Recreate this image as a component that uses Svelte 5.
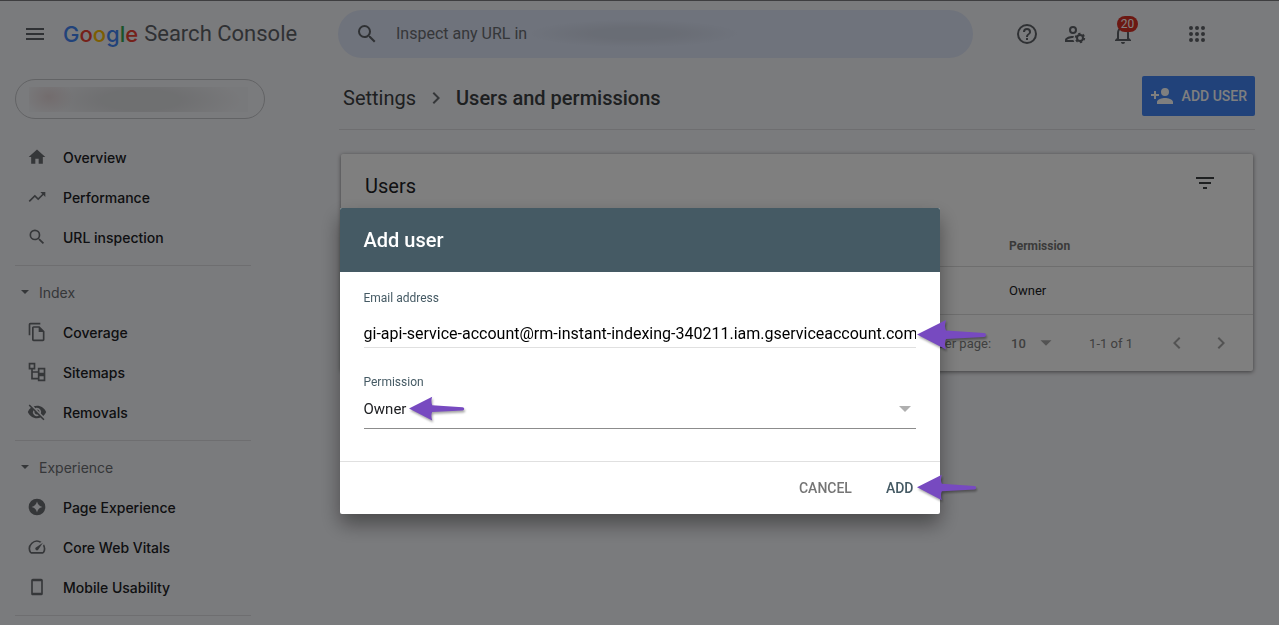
<script>
  const groups = [
    { title: "", items: [
      { name: "Overview", icon: "home" },
      { name: "Performance", icon: "trend" },
      { name: "URL inspection", icon: "search" },
    ] },
    { title: "Index", items: [
      { name: "Coverage", icon: "pages" },
      { name: "Sitemaps", icon: "tree" },
      { name: "Removals", icon: "hidden" },
    ] },
    { title: "Experience", items: [
      { name: "Page Experience", icon: "spark" },
      { name: "Core Web Vitals", icon: "speed" },
      { name: "Mobile Usability", icon: "phone" },
    ] },
  ];

  const icons = {
    menu: "M3 18h18v-2H3v2zm0-5h18v-2H3v2zm0-7v2h18V6H3z",
    home: "M10 20v-6h4v6h5v-8h3L12 3 2 12h3v8z",
    trend: "M16 6l2.29 2.29-4.88 4.88-4-4L2 16.59 3.41 18l6-6 4 4 6.3-6.29L22 12V6z",
    search: "M15.5 14h-.79l-.28-.27A6.47 6.47 0 0 0 16 9.5 6.5 6.5 0 1 0 9.5 16c1.61 0 3.09-.59 4.23-1.57l.27.28v.79l5 4.99L20.49 19l-4.99-5zm-6 0a4.5 4.5 0 1 1 0-9 4.5 4.5 0 0 1 0 9z",
    pages: "M16 1H4a2 2 0 0 0-2 2v13h2V3h12V1zm-1 4H8c-1.1 0-2 .9-2 2v14c0 1.1.9 2 2 2h11c1.1 0 2-.9 2-2V11l-6-6zM8 21V7h6v5h5v9H8z",
    tree: "M2 1v8h3v12h8v2h9v-8h-9v4H7v-6h6v2h9V7h-9v4H7V9h3V1H2zm2 2h4v4H4V3zm11 6h5v4h-5V9zm0 8h5v4h-5v-4z",
    hidden: "M12 7a5 5 0 0 1 4.64 6.83l2.92 2.92A11.8 11.8 0 0 0 23 12c-1.73-4.39-6-7.5-11-7.5-1.4 0-2.74.25-3.98.7l2.16 2.16C10.74 7.13 11.35 7 12 7zM2 4.27l2.28 2.28.46.46A11.8 11.8 0 0 0 1 12c1.73 4.39 6 7.5 11 7.5 1.55 0 3.03-.3 4.38-.84l.42.42L19.73 22 21 20.73 3.27 3 2 4.27zM7.53 9.8l1.55 1.55a3 3 0 0 0 3.57 3.57l1.55 1.55A5 5 0 0 1 7.53 9.8zm4.31-.78l3.15 3.15.02-.16a3 3 0 0 0-3.17-2.99z",
    spark: "M12 2a10 10 0 1 0 0 20 10 10 0 0 0 0-20zm0 3.5c.9 3.6 2.9 5.6 6.5 6.5-3.6.9-5.6 2.9-6.5 6.5-.9-3.6-2.9-5.6-6.5-6.5 3.6-.9 5.6-2.9 6.5-6.5z",
    speed: "M20.38 8.57l-1.23 1.85a8 8 0 0 1-.22 7.58H5.07A8 8 0 0 1 15.58 6.85l1.85-1.23A10 10 0 0 0 3.35 19a2 2 0 0 0 1.72 1h13.85a2 2 0 0 0 1.74-1 10 10 0 0 0-.27-10.44zm-9.79 6.84a2 2 0 0 0 2.83 0l5.66-8.49-8.49 5.66a2 2 0 0 0 0 2.83z",
    phone: "M17 2H7a2 2 0 0 0-2 2v16c0 1.1.9 2 2 2h10a2 2 0 0 0 2-2V4a2 2 0 0 0-2-2zm0 17H7V5h10v14z",
    help: "M11 18h2v-2h-2v2zm1-16a10 10 0 1 0 0 20 10 10 0 0 0 0-20zm0 18a8 8 0 1 1 0-16 8 8 0 0 1 0 16zm0-14a4 4 0 0 0-4 4h2a2 2 0 1 1 4 0c0 2-3 1.75-3 5h2c0-2.25 3-2.5 3-5a4 4 0 0 0-4-4z",
    bell: "M12 22a2 2 0 0 0 2-2h-4c0 1.1.9 2 2 2zm6-6v-5c0-3.07-1.63-5.64-4.5-6.32V4a1.5 1.5 0 0 0-3 0v.68C7.64 5.36 6 7.92 6 11v5l-2 2v1h16v-1l-2-2zm-2 1H8v-6c0-2.48 1.51-4.5 4-4.5s4 2.02 4 4.5v6z",
    apps: "M6 8a2 2 0 1 0 0-4 2 2 0 0 0 0 4zm6 0a2 2 0 1 0 0-4 2 2 0 0 0 0 4zm6 0a2 2 0 1 0 0-4 2 2 0 0 0 0 4zM6 14a2 2 0 1 0 0-4 2 2 0 0 0 0 4zm6 0a2 2 0 1 0 0-4 2 2 0 0 0 0 4zm6 0a2 2 0 1 0 0-4 2 2 0 0 0 0 4zM6 20a2 2 0 1 0 0-4 2 2 0 0 0 0 4zm6 0a2 2 0 1 0 0-4 2 2 0 0 0 0 4zm6 0a2 2 0 1 0 0-4 2 2 0 0 0 0 4z",
    addPerson: "M15 12a4 4 0 1 0 0-8 4 4 0 0 0 0 8zm-9-2V7H4v3H1v2h3v3h2v-3h3v-2H6zm9 4c-2.67 0-8 1.34-8 4v2h16v-2c0-2.66-5.33-4-8-4z",
    filter: "M10 18h4v-2h-4v2zM3 6v2h18V6H3zm3 7h12v-2H6v2z",
    left: "M15.41 7.41L14 6l-6 6 6 6 1.41-1.41L10.83 12z",
    right: "M10 6L8.59 7.41 13.17 12l-4.58 4.59L10 18l6-6z",
    down: "M6 9l6 6 6-6z",
    userGear: "M10 4a4 4 0 1 0 0 8 4 4 0 0 0 0-8zm0 2a2 2 0 1 1 0 4 2 2 0 0 1 0-4zM4 18c.2-.7 3-2 6.3-2a7 7 0 0 1 .7-2C7 13.7 2 15.3 2 18v2h9.3a7 7 0 0 1-.9-2H4z",
  };

  let email = "gi-api-service-account@rm-instant-indexing-340211.iam.gserviceaccount.com";
  let permission = "Owner";
</script>

{#snippet icon(name, size = 24)}
  <svg viewBox="0 0 24 24" width={size} height={size} fill="currentColor" aria-hidden="true">
    <path d={icons[name]} fill-rule={name === "tree" ? "evenodd" : "nonzero"} />
    {#if name === "userGear"}
      <circle cx="17" cy="16" r="3" fill="none" stroke="currentColor" stroke-width="2" />
      <circle cx="17" cy="16" r="4.3" fill="none" stroke="currentColor" stroke-width="1.8" stroke-dasharray="2.25 2.25" />
    {/if}
  </svg>
{/snippet}

{#snippet arrow(place)}
  <svg class="arrow {place}" viewBox="0 0 70 32" aria-hidden="true">
    <path d="M0 15.5L29 1Q27 7 29 11.5L67 14Q69 14 69 16Q69 18 67 18L29 20Q27 24 29 30.5Z" fill="#774ac0" />
  </svg>
{/snippet}

<div class="page">
  <header>
    <div class="brand">
      <button class="plain" aria-label="Menu">{@render icon("menu")}</button>
      <a class="logo" href="#home">
        <span class="google"><b class="blue">G</b><b class="red">o</b><b class="yellow">o</b><b class="blue">g</b><b class="green">l</b><b class="red">e</b></span>
        <span>Search Console</span>
      </a>
    </div>
    <div class="inspect">
      {@render icon("search")}
      <input type="text" placeholder="Inspect any URL in" aria-label="Inspect any URL" />
      <span class="smudge"></span>
    </div>
    <div class="tools">
      <button class="plain" aria-label="Help">{@render icon("help")}</button>
      <button class="plain" aria-label="User settings">{@render icon("userGear")}</button>
      <button class="plain" aria-label="Notifications">{@render icon("bell")}<span class="badge">20</span></button>
      <button class="plain apps" aria-label="Apps">{@render icon("apps")}</button>
    </div>
  </header>

  <div class="columns">
    <nav>
      <button class="property" aria-label="Property"><span></span></button>
      {#each groups as group}
        <section>
          {#if group.title}
            <button class="group">{@render icon("down", 16)}{group.title}</button>
          {/if}
          {#each group.items as item}
            <a class="item" href="#{item.icon}">{@render icon(item.icon, 20)}{item.name}</a>
          {/each}
        </section>
      {/each}
    </nav>

    <main>
      <div class="heading">
        <h1><a href="#settings">Settings</a>{@render icon("right")}<span>Users and permissions</span></h1>
        <button class="add-user">{@render icon("addPerson")}ADD USER</button>
      </div>
      <div class="card">
        <div class="card-head">
          <h2>Users</h2>
          <button class="plain" aria-label="Filter">{@render icon("filter")}</button>
        </div>
        <table>
          <thead>
            <tr><td></td><th>Permission</th></tr>
          </thead>
          <tbody>
            <tr><td></td><td>Owner</td></tr>
          </tbody>
        </table>
        <div class="pager">
          <label for="rows">Rows per page:</label>
          <span class="rows">
            <select id="rows"><option>10</option></select>
            {@render icon("down", 22)}
          </span>
          <span class="range">1-1 of 1</span>
          <button class="plain" aria-label="Previous page">{@render icon("left")}</button>
          <button class="plain" aria-label="Next page">{@render icon("right")}</button>
        </div>
      </div>
    </main>
  </div>
</div>

<div class="scrim">
  <div class="dialog" role="dialog" aria-labelledby="dialog-title">
    <h2 id="dialog-title">Add user</h2>
    <form>
      <div class="fields">
        <label for="email">Email address</label>
        <div class="field email">
          <input id="email" type="text" bind:value={email} />
          {@render arrow("at-email")}
        </div>
        <label for="permission">Permission</label>
        <div class="field permission">
          <select id="permission" bind:value={permission}>
            <option>Owner</option>
          </select>
          {@render icon("down", 24)}
          {@render arrow("at-permission")}
        </div>
      </div>
      <div class="actions">
        <button type="button">CANCEL</button>
        <button type="button" class="add">ADD{@render arrow("at-add")}</button>
      </div>
    </form>
  </div>
</div>

<style>
  :global(body) {
    background: #f5f6fa;
    overflow: hidden;
  }

  .page,
  .scrim {
    box-sizing: border-box;
    font-family: Roboto, "Liberation Sans", sans-serif;
    color: #202124;
  }

  .page {
    min-height: 100vh;
    border-top: 1px solid #7c7c80;
  }

  svg {
    display: block;
    flex: none;
  }

  button,
  input,
  select {
    font: inherit;
    color: inherit;
    background: none;
    border: 0;
    padding: 0;
    margin: 0;
    outline: none;
    appearance: none;
  }

  a {
    color: inherit;
    text-decoration: none;
  }

  h1,
  h2 {
    margin: 0;
    font-weight: 400;
  }

  .plain {
    position: relative;
    color: #5f6368;
  }

  header {
    display: flex;
    align-items: center;
    height: 65px;
    padding-right: 70px;
  }

  .brand {
    display: flex;
    align-items: center;
    gap: 16px;
    width: 315px;
    padding-left: 23px;
  }

  .logo {
    display: flex;
    align-items: center;
    gap: 6px;
    font-size: 22px;
    line-height: 32px;
    color: #5f6368;
  }

  .google {
    font-family: Inter, Roboto, sans-serif;
  }

  .google b {
    font-weight: 500;
  }

  .blue { color: #4285f4; }
  .red { color: #ea4335; }
  .yellow { color: #fbbc05; }
  .green { color: #34a853; }

  .inspect {
    display: flex;
    flex: 1;
    align-items: center;
    height: 48px;
    padding-left: 17px;
    border-radius: 24px;
    background: #dee6f8;
    color: #5f6368;
  }

  .inspect input {
    width: 134px;
    margin-left: 17px;
    font-size: 16px;
  }

  .inspect input::placeholder {
    color: #6b6e73;
    opacity: 1;
  }

  .smudge {
    width: 208px;
    height: 27px;
    background: radial-gradient(ellipse closest-side, #d3daea 40%, #dee6f8);
  }

  .tools {
    display: flex;
    align-items: center;
    gap: 24px;
    padding-left: 42px;
  }

  .tools .apps {
    margin-left: 26px;
  }

  .badge {
    position: absolute;
    top: -6px;
    left: 6px;
    width: 21px;
    border-radius: 8px;
    background: #d93025;
    color: #fff;
    font-size: 12px;
    line-height: 16px;
    text-align: center;
  }

  .columns {
    display: flex;
  }

  nav {
    width: 250px;
    padding: 13px 74px 0 15px;
    font-family: Inter, Roboto, sans-serif;
    font-size: 14px;
  }

  .property {
    display: block;
    box-sizing: border-box;
    width: 100%;
    height: 40px;
    margin-bottom: 18px;
    padding: 0 16px 0 13px;
    border: 1px solid #c4c6ca;
    border-radius: 20px;
  }

  .property span {
    display: block;
    height: 25px;
    background:
      radial-gradient(ellipse 24px 18px at 20px 10px, #e6d9db, transparent),
      radial-gradient(ellipse 100px 26px at 112px 13px, #dfe0e3 40%, transparent),
      #f1f2f6;
  }

  section {
    width: 236px;
    margin-bottom: 6px;
    padding-bottom: 8px;
    border-bottom: 1px solid #dcdde1;
  }

  .item,
  .group {
    display: flex;
    align-items: center;
    height: 40px;
  }

  .item {
    gap: 16px;
    padding-left: 12px;
    font-weight: 500;
  }

  .item svg {
    color: #6b6e73;
  }

  .group {
    gap: 6px;
    padding-left: 2px;
    color: #6b6e73;
  }

  main {
    flex: 1;
    min-width: 0;
    padding-right: 24px;
  }

  .heading {
    display: flex;
    align-items: flex-start;
    justify-content: space-between;
    box-sizing: border-box;
    height: 64px;
    padding: 10px 0 0 4px;
    border-bottom: 1px solid #dcdde1;
  }

  h1 {
    display: flex;
    align-items: center;
    gap: 8px;
    font-size: 20px;
    line-height: 44px;
    color: #3c4043;
  }

  h1 span {
    font-weight: 500;
  }

  h1 svg {
    color: #6b6e73;
  }

  .add-user {
    display: flex;
    align-items: center;
    gap: 8px;
    height: 40px;
    padding: 0 8px;
    border-radius: 2px;
    background: #4285f4;
    color: #fff;
    font-size: 14px;
    font-weight: 500;
  }

  .card {
    margin: 24px 2px 0;
    border-radius: 2px;
    background: #fff;
    box-shadow: 0 1px 4px rgba(0, 0, 0, 0.5);
  }

  .card-head {
    display: flex;
    align-items: flex-start;
    justify-content: space-between;
    box-sizing: border-box;
    height: 72px;
    padding: 17px 36px 0 24px;
  }

  .card-head h2 {
    font-size: 20px;
    line-height: 30px;
  }

  .card-head .plain {
    color: #3c4043;
  }

  table {
    width: 100%;
    border-collapse: collapse;
    table-layout: fixed;
    font-size: 13px;
  }

  th,
  td {
    height: 47px;
    padding: 0;
    border-bottom: 1px solid #dcdcdc;
    text-align: left;
  }

  thead td,
  thead th {
    height: 40px;
    font-size: 12px;
    color: #757575;
  }

  thead td {
    width: 668px;
  }

  .pager {
    display: flex;
    align-items: center;
    justify-content: flex-end;
    height: 56px;
    padding-right: 20px;
    font-size: 13px;
    color: #808080;
  }

  .pager label {
    margin-right: 20px;
  }

  .rows {
    display: flex;
    align-items: center;
    width: 46px;
    justify-content: space-between;
    font-weight: 500;
  }

  .rows svg {
    color: #a6a6a6;
  }

  .range {
    margin: 0 32px;
  }

  .pager .plain + .plain {
    margin-left: 20px;
  }

  .pager .plain {
    color: #a6a6a6;
  }

  .scrim {
    position: fixed;
    inset: 0;
    display: flex;
    align-items: flex-start;
    justify-content: center;
    padding-top: 208px;
    background: rgba(0, 0, 0, 0.5);
  }

  .dialog {
    width: 600px;
    max-width: 100%;
    border-radius: 2px;
    background: #fff;
    box-shadow: 0 10px 20px rgba(0, 0, 0, 0.4);
  }

  .dialog h2 {
    padding: 0 24px;
    border-radius: 2px 2px 0 0;
    background: #455a64;
    color: #fff;
    font-size: 20px;
    font-weight: 500;
    line-height: 64px;
  }

  .fields {
    padding: 18px 24px 32px;
  }

  .fields label {
    display: block;
    font-size: 12px;
    line-height: 16px;
    color: #455a64;
  }

  .field {
    position: relative;
    display: flex;
    align-items: center;
    font-size: 16px;
  }

  .field input,
  .field select {
    flex: 1;
    min-width: 0;
    height: 100%;
  }

  .email {
    height: 27px;
    margin: 14px 0 26px;
    border-bottom: 1px solid #e0e0e0;
    color: #000;
  }

  .permission {
    height: 38px;
    border-bottom: 1px solid #8c8c8c;
    font-size: 15px;
  }

  .permission > svg:not(.arrow) {
    position: absolute;
    right: -1px;
    color: #afafaf;
    pointer-events: none;
  }

  .actions {
    display: flex;
    align-items: center;
    justify-content: flex-end;
    gap: 34px;
    height: 52px;
    padding-right: 26px;
    border-top: 1px solid #e0e0e0;
    color: #757575;
    font-size: 14px;
    font-weight: 500;
  }

  .add {
    position: relative;
    color: #455a64;
  }

  .arrow {
    position: absolute;
    filter: drop-shadow(1px 2px 1px rgba(0, 0, 0, 0.35));
    pointer-events: none;
  }

  .at-email {
    left: calc(100% + 1px);
    top: -1px;
    width: 70px;
  }

  .at-permission {
    left: 45px;
    top: 6px;
    width: 56px;
  }

  .at-add {
    left: calc(100% + 3px);
    top: -6px;
    width: 60px;
  }
</style>
